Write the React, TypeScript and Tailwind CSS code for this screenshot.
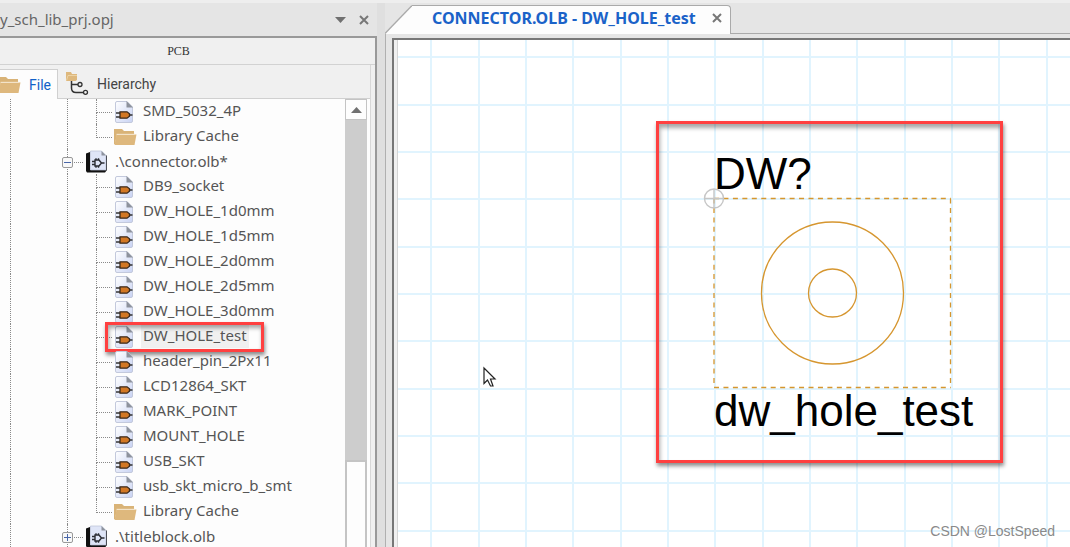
import React, { useState } from 'react';

type Part = { name: string; kind: 'part' | 'cache'; last?: boolean; selected?: boolean };

const firstParts: Part[] = [
  { name: 'SMD_5032_4P', kind: 'part' },
  { name: 'Library Cache', kind: 'cache', last: true },
];

const connectorParts: Part[] = [
  { name: 'DB9_socket', kind: 'part' },
  { name: 'DW_HOLE_1d0mm', kind: 'part' },
  { name: 'DW_HOLE_1d5mm', kind: 'part' },
  { name: 'DW_HOLE_2d0mm', kind: 'part' },
  { name: 'DW_HOLE_2d5mm', kind: 'part' },
  { name: 'DW_HOLE_3d0mm', kind: 'part' },
  { name: 'DW_HOLE_test', kind: 'part', selected: true },
  { name: 'header_pin_2Px11', kind: 'part' },
  { name: 'LCD12864_SKT', kind: 'part' },
  { name: 'MARK_POINT', kind: 'part' },
  { name: 'MOUNT_HOLE', kind: 'part' },
  { name: 'USB_SKT', kind: 'part' },
  { name: 'usb_skt_micro_b_smt', kind: 'part' },
  { name: 'Library Cache', kind: 'cache', last: true },
];

function FolderIcon() {
  return (
    <svg width="24" height="18" viewBox="0 0 24 18" className="shrink-0" aria-hidden="true">
      <path d="M1 16V1h8l2 2h10v3H4L2 16z" fill="#d9b377" />
      <path d="M3.5 6.5H23.5L21.5 17H1.5z" fill="#deb87d" />
      <path d="M3.5 6.3H22" stroke="#f5e7cf" strokeWidth="0.9" />
    </svg>
  );
}

function PartIcon() {
  return (
    <svg width="20" height="24" viewBox="0 0 20 24" className="shrink-0" aria-hidden="true">
      <defs>
        <linearGradient id="sheet" x1="0" y1="0" x2="1" y2="1">
          <stop offset="0" stopColor="#ffffff" />
          <stop offset="1" stopColor="#c9d3f3" />
        </linearGradient>
      </defs>
      <path d="M3 1.5H13L18.5 7V21Q18.5 22.5 17 22.5H3Q1.5 22.5 1.5 21V3Q1.5 1.5 3 1.5z" fill="url(#sheet)" stroke="#c3c9dc" />
      <path d="M12.5 1L19 7.5H12.5z" fill="#8d929c" />
      <path d="M2 13H6M2 17H6M14 15H18.5" stroke="#333" strokeWidth="1.5" />
      <path d="M6 11.800H13L15.500 13.800V16.200L13 18.200H6z" fill="#d27724" stroke="#3b2a1d" strokeWidth="1.3" />
    </svg>
  );
}

function LibraryIcon() {
  return (
    <svg width="22" height="24" viewBox="0 0 22 24" className="shrink-0" aria-hidden="true">
      <path d="M0 3.5L4 2V20H20V5L21 6V20L19 22.5H1L0 21z" fill="#111" />
      <path d="M4.5 1H15.5L20 5.5V20H4.5z" fill="#dfe5f7" stroke="#b9c0d4" strokeWidth="0.7" />
      <path d="M15.5 1V5.5H20z" fill="#8d929c" />
      <path
        d="M9 10H13L15.5 13L13 16H9zM6 11.5H9M6 14.5H9M15.5 13H18.5M10 8.200V10M12.500 8.200V10M10 16V17.800M12.500 16V17.800"
        fill="none"
        stroke="#2b2d33"
        strokeWidth="1.4"
      />
    </svg>
  );
}

function HierarchyIcon() {
  return (
    <svg width="23" height="23" viewBox="0 0 23 23" className="shrink-0" aria-hidden="true">
      <path d="M0 9V0H5L6 2H11V8L9.5 9z" fill="#deb87d" />
      <path d="M0.5 8.5L2 3.5H11" fill="none" stroke="#f0d9b0" strokeWidth="0.8" />
      <path d="M5.5 9V16Q5.500 20.500 10 20.500H17M5.500 12.500H12" fill="none" stroke="#333" strokeWidth="1.5" />
      <circle cx="14" cy="12.500" r="2" fill="#f2f2f2" stroke="#333" strokeWidth="1.300" />
      <circle cx="19.500" cy="20.300" r="2" fill="#f2f2f2" stroke="#333" strokeWidth="1.300" />
    </svg>
  );
}

function CrossIcon() {
  return (
    <svg width="10" height="10" viewBox="0 0 10 10" aria-hidden="true">
      <path d="M1 1L9 9M9 1L1 9" stroke="#777" strokeWidth="2" />
    </svg>
  );
}

function Branch({ last }: { last?: boolean }) {
  return (
    <span className="flex h-full w-4 shrink-0 flex-col">
      <span className="h-[14px] border-b border-l border-dotted border-[#8a8a8a]" />
      {!last && <span className="flex-1 border-l border-dotted border-[#8a8a8a]" />}
    </span>
  );
}

function PartRow({ part }: { part: Part }) {
  return (
    <li role="treeitem" aria-selected={!!part.selected} className="relative flex h-[25px] items-center pl-[10px]">
      <span className="h-full w-[57px] shrink-0 border-l border-dotted border-[#8a8a8a]" />
      <span className="h-full w-[29px] shrink-0 border-l border-dotted border-[#8a8a8a]" />
      <Branch last={part.last} />
      <span className="flex w-[29px] shrink-0 pl-px">
        {part.kind === 'part' ? <span className="pl-px"><PartIcon /></span> : <FolderIcon />}
      </span>
      <button
        type="button"
        className={part.selected ? 'self-start bg-[#f0f0f0] px-0.5 pb-0.5 leading-[22px]' : 'self-start px-0.5 pb-0.5 leading-[22px]'}
      >
        {part.name}
      </button>
      {part.selected && (
        <span className="pointer-events-none absolute -top-0.5 left-[105px] h-[30px] w-[159px] border-3 border-[#ff4040] shadow-[1px_3px_4px_rgba(0,0,0,0.45),inset_1px_3px_4px_rgba(0,0,0,0.35)]" />
      )}
    </li>
  );
}

function LibraryRow({ name, open, onToggle }: { name: string; open: boolean; onToggle: () => void }) {
  return (
    <li role="treeitem" aria-expanded={open} className="flex h-[25px] items-center pl-[10px]">
      <span className="h-full w-[57px] shrink-0 border-l border-dotted border-[#8a8a8a]" />
      <span className="relative flex h-full w-[19px] shrink-0">
        <Branch />
        <button
          type="button"
          aria-label={open ? `Collapse ${name}` : `Expand ${name}`}
          onClick={onToggle}
          className="absolute top-2 -left-[5px] flex size-[11px] items-center justify-center rounded-xs border border-[#999] bg-[#f8f8f8]"
        >
          <svg width="7" height="7" viewBox="0 0 7 7" className="shrink-0" aria-hidden="true">
            <path d={open ? 'M0 3.5H7' : 'M0 3.5H7M3.5 0V7'} stroke="#4866a8" />
          </svg>
        </button>
      </span>
      <LibraryIcon />
      <span className="self-start pl-[7px] leading-[24px]">{name}</span>
    </li>
  );
}

function ProjectPanel() {
  const [connectorOpen, setConnectorOpen] = useState(true);
  const [titleOpen, setTitleOpen] = useState(false);
  return (
    <aside className="flex w-[377px] shrink-0 flex-col">
      <header className="flex h-[33px] shrink-0 items-center pr-2">
        <h1 className="flex-1 text-[15px] text-[#666]">y_sch_lib_prj.opj</h1>
        <button type="button" aria-label="Panel menu" className="px-[13px]">
          <svg width="11" height="6" viewBox="0 0 11 6" aria-hidden="true">
            <path d="M0 0H11L5.500 6z" fill="#707070" />
          </svg>
        </button>
        <button type="button" aria-label="Close panel">
          <CrossIcon />
        </button>
      </header>
      <div className="flex min-h-0 flex-1 flex-col border-t-2 border-r-2 border-[#999] bg-[#f0f0f0]">
        <div className="flex h-[27px] shrink-0 items-center justify-center border-b border-[#d2d2d2] pr-[18px] font-['Liberation_Serif',serif] text-xs text-[#333]">
          PCB
        </div>
        <div className="mr-1 flex min-h-0 flex-1 flex-col border-r border-[#d8d8d8]">
          <div role="tablist" className="flex h-[34px] shrink-0 items-end font-['Roboto',sans-serif] text-sm text-[#444]">
            <button type="button" role="tab" aria-selected="true" className="flex h-[30px] w-[58px] items-center gap-2 border-t border-r border-[#d0d0d0] bg-[#fdfdfd] text-[#1060c8]">
              <span className="-ml-[3px] flex">
                <FolderIcon />
              </span>
              File
            </button>
            <button type="button" role="tab" aria-selected="false" className="flex h-[30px] flex-1 items-center gap-2 border-b border-[#d0d0d0] pl-2">
              <HierarchyIcon />
              Hierarchy
            </button>
          </div>
          <div className="flex min-h-0 flex-1 bg-[#fdfdfd] pr-[3px]">
            <ul role="tree" aria-label="Project files" className="min-w-0 flex-1 overflow-hidden text-[15px] text-[#555]">
              {firstParts.map((p) => (
                <PartRow key={p.name} part={p} />
              ))}
              <LibraryRow name=".\connector.olb*" open={connectorOpen} onToggle={() => setConnectorOpen(!connectorOpen)} />
              {connectorOpen && connectorParts.map((p) => <PartRow key={p.name} part={p} />)}
              <LibraryRow name=".\titleblock.olb" open={titleOpen} onToggle={() => setTitleOpen(!titleOpen)} />
            </ul>
            <div className="flex w-[22px] shrink-0 flex-col bg-[#cdcdcd]">
              <button type="button" aria-label="Scroll up" className="flex h-[21px] shrink-0 items-center justify-center border border-[#c4c4c4] bg-[#fdfdfd]">
                <svg width="11" height="6" viewBox="0 0 11 6" aria-hidden="true">
                  <path d="M0 6H11L5.500 0z" fill="#707070" />
                </svg>
              </button>
              <div className="h-[340px] shrink-0" />
              <div className="flex-1 border-x-2 border-t-2 border-[#c4c4c4] bg-[#fdfdfd]" />
            </div>
          </div>
        </div>
      </div>
    </aside>
  );
}

function SymbolCanvas() {
  return (
    <div className="relative min-w-0 flex-1 overflow-hidden bg-white font-['Liberation_Sans',sans-serif]">
      <svg className="absolute inset-0 h-full w-full" aria-hidden="true">
        <defs>
          <pattern id="grid" x="32" y="16" width="142" height="142" patternUnits="userSpaceOnUse">
            <path d="M1 0V142M49 0V142M96 0V142M0 1H142M0 49H142M0 96H142" stroke="#e1f4fe" strokeWidth="2" />
          </pattern>
        </defs>
        <rect width="100%" height="100%" fill="url(#grid)" />
        <g fill="none" stroke="#d6962f" strokeWidth="1.3">
          <path d="M316 158.500H553M316 347.500H553M316 158.500V347.500M552.500 158.500V347.500" strokeDasharray="5 4.450" />
          <circle cx="434.500" cy="253" r="71" />
          <circle cx="434.500" cy="253" r="24" />
        </g>
        <g fill="none" stroke="#c6c6c6" strokeWidth="1.400">
          <circle cx="316" cy="158.500" r="9.500" />
          <path d="M306.500 158.500H325.500M316 149V168" />
        </g>
        <path d="M86 328V343.500L89.500 340L92.500 346H95L92.500 339H97z" fill="#fff" stroke="#222" strokeWidth="1.200" />
      </svg>
      <p className="absolute top-[110px] left-[316px] text-[44px] leading-[48px] text-black">DW?</p>
      <p className="absolute top-[347px] left-[316px] text-[44px] leading-[48px] text-black">dw_hole_test</p>
      <div className="pointer-events-none absolute top-[81px] left-[258px] h-[342px] w-[347px] border-3 border-[#ff4040] shadow-[1px_3px_4px_rgba(0,0,0,0.45),inset_1px_4px_4px_rgba(0,0,0,0.35)]" />
      <p className="absolute right-[15px] bottom-1.5 text-sm text-[#8a8a8a]">CSDN @LostSpeed</p>
    </div>
  );
}

export default function App() {
  return (
    <div className="flex h-screen flex-col overflow-hidden bg-[#e5e5e5] font-['Noto_Sans',sans-serif]">
      <div className="h-[3px] shrink-0 bg-[#eeeeee]" />
      <div className="flex min-h-0 flex-1">
        <ProjectPanel />
        <div className="w-2 shrink-0 bg-[#dfdfdf]" />
        <main className="flex min-w-0 flex-1 flex-col">
          <div className="flex h-[31px] shrink-0 items-end">
            <svg width="27" height="29" viewBox="0 0 27 29" className="shrink-0" aria-hidden="true">
              <path d="M0 29L27 0V29z" fill="#fdfdfd" />
              <path d="M0 28.500L27 0.500" stroke="#aaa" strokeWidth="1.300" />
            </svg>
            <div className="flex h-[29px] shrink-0 items-center gap-4 rounded-tr-sm border-t border-r border-[#aaa] bg-[#fdfdfd] pr-2 pb-1 pl-5">
              <h2 className="text-base font-bold text-[#1a62c8]">CONNECTOR.OLB - DW_HOLE_test</h2>
              <button type="button" aria-label="Close document">
                <CrossIcon />
              </button>
            </div>
            <div className="h-px flex-1 bg-[#aaa]" />
          </div>
          <div className="flex min-h-0 flex-1 border-l border-[#b0b0b0] pt-1 pl-1.5">
            <div className="flex min-w-0 flex-1 border-t-2 border-l-2 border-[#777]">
              <div className="w-1 shrink-0 border-r border-[#d4d4d4] bg-[#f0f0f0]" />
              <SymbolCanvas />
            </div>
          </div>
        </main>
      </div>
    </div>
  );
}
